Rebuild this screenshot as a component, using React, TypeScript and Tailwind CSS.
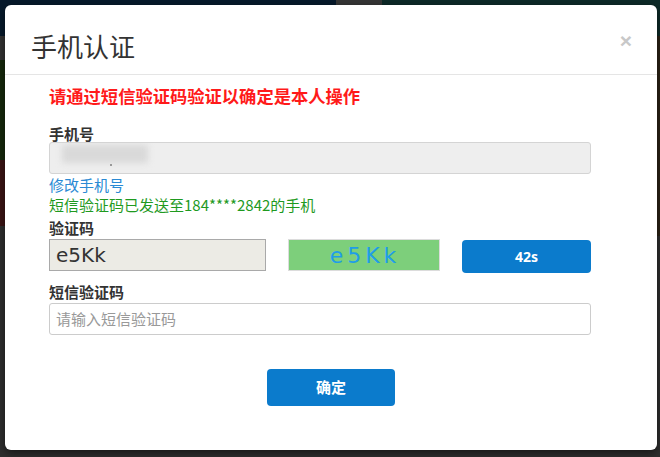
import React from "react";

const cjk = { fontFamily: '"Noto Sans CJK SC", "Noto Sans", sans-serif' };

export default function App() {
  return (
    <div className="relative w-[660px] h-[457px] overflow-hidden bg-[#2e2e2e]" style={cjk}>
      {/* dimmed underlying page */}
      <div className="flex h-[36px]">
        <div className="w-[336px] bg-[#06192b]" />
        <div className="w-[46px] bg-[#363636]" />
        <div className="flex-1 bg-[#0d2a28]" />
      </div>
      <div className="flex h-[200px]">
        <div className="w-[6px] flex flex-col">
          <div className="h-[24px] bg-[#333333]" />
          <div className="h-[100px] bg-[#16290c]" />
          <div className="h-[66px] bg-[#3b1414]" />
        </div>
        <div className="flex-1" />
        <div className="w-[6px] bg-[#2b2216]" />
      </div>

      {/* modal */}
      <div className="absolute left-[5px] top-[5px] w-[652px] h-[445px] bg-white rounded-[6px] shadow-[0_3px_9px_rgba(0,0,0,0.5)]">
        <div className="relative h-[70px] border-b border-[#e5e5e5] pl-[26px] pt-[26px]">
          <div className="text-[26px] leading-[30px] text-[#333]">手机认证</div>
          <span
            className="absolute right-[25px] top-[25px] text-[21px] leading-[21px] font-bold text-[#c8c8c8]"
            style={{ fontFamily: '"Liberation Sans", sans-serif' }}
          >
            ×
          </span>
        </div>

        <div className="pl-[44px] pt-[9px]">
          <div className="text-[17.3px] leading-[24px] font-bold text-[#ff1a1a]">
            请通过短信验证码验证以确定是本人操作
          </div>

          <div className="mt-[17px] text-[15px] leading-[17px] font-bold text-[#333]">手机号</div>
          <div className="relative w-[542px] h-[32px] bg-[#eeeeee] border border-[#d4d4d4] rounded-[3px] overflow-hidden">
            <div className="absolute left-[12px] top-[2px] w-[86px] h-[18px] bg-[#d9d9d9] blur-[3px]" />
            <div className="absolute left-[60px] top-[21px] w-[2px] h-[2px] bg-[#999]" />
          </div>

          <div className="text-[15px] leading-[20px] text-[#2a8ad4] mt-[1px]">修改手机号</div>
          <div className="text-[15px] leading-[20px] text-[#1f9a1f]">短信验证码已发送至184****2842的手机</div>

          <div className="mt-[4px] text-[15px] leading-[18px] font-bold text-[#333]">验证码</div>
          <div className="mt-[2px] flex items-start">
            <div
              className="w-[217px] h-[32px] bg-[#ecebe5] border border-[#a9a9a9] flex items-center pl-[6px] text-[20px] text-[#333]"
              style={{ fontFamily: '"DejaVu Sans", sans-serif' }}
            >
              e5Kk
            </div>
            <div
              className="ml-[22px] w-[152px] h-[32px] bg-[#7dcf7b] border border-[#dcdcdc] flex items-center justify-center text-[22px] tracking-[4px] text-[#1f9de8]"
              style={{ fontFamily: '"DejaVu Sans", sans-serif' }}
            >
              <span className="pl-[2px]">e5Kk</span>
            </div>
            <div
              className="ml-[22px] mt-[1px] w-[129px] h-[33px] bg-[#0b7bcc] rounded-[4px] flex items-center justify-center text-white text-[14px] font-bold"
              style={{ fontFamily: '"Noto Sans", sans-serif' }}
            >
              42s
            </div>
          </div>

          <div className="mt-[9px] text-[15px] leading-[19px] font-bold text-[#333]">短信验证码</div>
          <div className="mt-[2px] w-[542px] h-[32px] border border-[#cccccc] rounded-[3px] flex items-center pl-[6px] text-[15px] text-[#999]">
            请输入短信验证码
          </div>
        </div>

        <div className="mt-[34px] flex justify-center">
          <div className="w-[128px] h-[37px] bg-[#0b7bcc] rounded-[4px] flex items-center justify-center text-white text-[15px] font-bold">
            确定
          </div>
        </div>
      </div>
    </div>
  );
}
